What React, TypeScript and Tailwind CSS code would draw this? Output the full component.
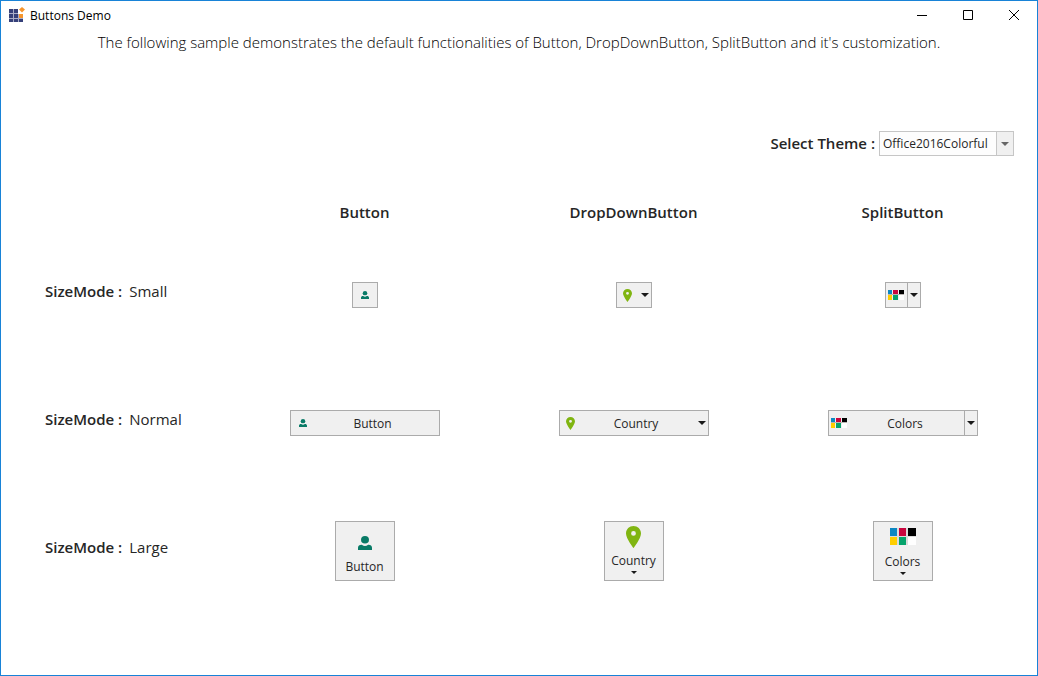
import { useState, type ReactNode } from "react";

function AppLogo() {
  return (
    <svg width="16" height="16" viewBox="0 0 16 16" aria-hidden="true">
      <path d="M0 2h9v5h5v8H0z" fill="#a9aec9" />
      <path d="M0 2h4v4H0zM5 2h4v4H5zM0 7h4v4H0zM5 7h4v4H5zM0 12h4v3H0zM5 12h4v3H5zM10 12h4v3h-4z" fill="#354079" />
      <path d="M10 7h4v4h-4z" fill="#f5952d" />
      <path d="M13 0l3 2.500-3 3-3-3z" fill="#f5952d" />
    </svg>
  );
}

function PersonIcon({ size }: { size: number }) {
  return (
    <svg width={size} height={size} viewBox="0 0 14 14" fill="#087a66" aria-hidden="true">
      <ellipse cx="7" cy="3.8" rx="4" ry="3.8" />
      <path d="M0 14v-2.200C0 9.800 1.400 8.700 3.600 8.700h.2a5 5 0 0 0 6.400 0h.2C12.600 8.700 14 9.800 14 11.800V14z" />
    </svg>
  );
}

function PinIcon({ width, height }: { width: number; height: number }) {
  return (
    <svg width={width} height={height} viewBox="0 0 15 22" preserveAspectRatio="none" aria-hidden="true">
      <path
        fillRule="evenodd"
        fill="#80b511"
        d="M7.500 0C3.400 0 0 3.200 0 7.400 0 12.500 7.500 22 7.500 22S15 12.500 15 7.400C15 3.200 11.600 0 7.500 0zm0 5a2.400 2.400 0 1 1 0 4.800 2.400 2.400 0 0 1 0-4.800z"
      />
    </svg>
  );
}

function SwatchIcon({ large = false }: { large?: boolean }) {
  return large ? (
    <svg width="26" height="18" viewBox="0 0 26 18" shapeRendering="crispEdges" aria-hidden="true">
      <path d="M0 8h26v1H0zM7 0h2v17H7zM16 0h2v17h-2z" fill="#dcdcdc" />
      <path d="M0 0h7v8H0z" fill="#0c87c2" />
      <path d="M9 0h7v8H9z" fill="#c8063e" />
      <path d="M18 0h8v8h-8z" fill="#000" />
      <path d="M0 9h7v8H0z" fill="#ffce00" />
      <path d="M9 9h7v8H9z" fill="#06a36c" />
      <path d="M18 9h8v8h-8z" fill="#fff" />
    </svg>
  ) : (
    <svg width="16" height="10" viewBox="0 0 16 10" shapeRendering="crispEdges" aria-hidden="true">
      <path d="M0 4h16v1H0z" fill="#b9b5b2" />
      <path d="M0 0h4v4H0z" fill="#0c87c2" />
      <path d="M5 0h5v4H5z" fill="#c8063e" />
      <path d="M11 0h5v4h-5z" fill="#000" />
      <path d="M0 5h4v5H0z" fill="#ffce00" />
      <path d="M5 5h5v5H5z" fill="#06a36c" />
      <path d="M11 5h5v5h-5z" fill="#fff" />
    </svg>
  );
}

function Caret({ small = false, color = "#1a1a1a" }: { small?: boolean; color?: string }) {
  return (
    <svg width={small ? 6 : 8} height={small ? 3 : 4} viewBox="0 0 8 4" fill={color} aria-hidden="true">
      <path d="M0 0h8L4 4z" />
    </svg>
  );
}

const face = "flex items-center border border-[#ababab] bg-[#f0f0f0] text-[12px] leading-4 text-[#262626] hover:bg-[#e3e3e3]";

function Row({ label, children }: { label: string; children: ReactNode }) {
  return (
    <div className="grid h-32 grid-cols-[229px_repeat(3,minmax(0,1fr))] items-center justify-items-center">
      <h2 className="mb-2 flex gap-[7px] justify-self-start pl-11 text-[15px] leading-5">
        <span className="font-semibold">SizeMode :</span>
        <span>{label}</span>
      </h2>
      {children}
    </div>
  );
}

const themes = ["Office2016Colorful", "Office2016White", "Office2016Black", "Office2016DarkGray"];

export default function App() {
  const [theme, setTheme] = useState(themes[0]);

  return (
    <div className="min-h-screen border border-[#1883d7] bg-white font-['Open_Sans',sans-serif] text-[#262626]">
      <header className="flex h-7 items-center pl-2">
        <AppLogo />
        <h1 className="ml-[5px] grow pt-0.5 text-[12px] leading-4 text-black">Buttons Demo</h1>
        <button type="button" aria-label="Minimize" className="flex h-7 w-[46px] items-center justify-center hover:bg-gray-200">
          <svg width="10" height="10" aria-hidden="true"><path d="M0 5h10v1H0z" /></svg>
        </button>
        <button type="button" aria-label="Maximize" className="flex h-7 w-[46px] items-center justify-center hover:bg-gray-200">
          <svg width="10" height="10" fill="none" stroke="#000" aria-hidden="true"><path d="M.5 .5h9v9h-9z" /></svg>
        </button>
        <button type="button" aria-label="Close" className="flex h-7 w-[46px] items-center justify-center hover:bg-red-500">
          <svg width="10" height="10" fill="none" stroke="#000" aria-hidden="true"><path d="M0 0l10 10M10 0L0 10" /></svg>
        </button>
      </header>

      <main className="pt-px">
        <p className="text-center text-[15px] font-light leading-6 text-black">
          The following sample demonstrates the default functionalities of Button, DropDownButton, SplitButton and it's customization.
        </p>

        <div className="mt-[77px] flex items-start justify-end pr-[23px]">
          <label htmlFor="theme" className="mr-1 text-[15px] font-semibold leading-6">Select Theme :</label>
          <div className="relative">
            <select
              id="theme"
              value={theme}
              onChange={(event) => setTheme(event.target.value)}
              className="block h-[25px] w-[135px] appearance-none border border-[#c6c6c6] bg-[#fdfdfd] pl-[3px] pr-[18px] text-[12px]"
            >
              {themes.map((name) => <option key={name}>{name}</option>)}
            </select>
            <span className="pointer-events-none absolute inset-y-px right-px flex w-[17px] items-center justify-center border-l border-[#c6c6c6] bg-[#f0f0f0]">
              <Caret color="#666" />
            </span>
          </div>
        </div>

        <div className="mb-[9px] mt-[46px] grid grid-cols-[229px_repeat(3,minmax(0,1fr))] text-center text-[15px] font-semibold leading-5">
          <h2 className="col-start-2">Button</h2>
          <h2>DropDownButton</h2>
          <h2>SplitButton</h2>
        </div>

        <Row label="Small">
          <button type="button" aria-label="Button" className={`${face} size-[26px] justify-center`}>
            <PersonIcon size={8} />
          </button>
          <button type="button" aria-label="Country" className={`${face} h-[26px] w-9 justify-between pl-1.5 pr-0.5`}>
            <PinIcon width={9} height={13} />
            <Caret />
          </button>
          <div className="flex">
            <button type="button" aria-label="Colors" className={`${face} h-[26px] w-[23px] justify-center`}>
              <SwatchIcon />
            </button>
            <button type="button" aria-label="More colors" className={`${face} h-[26px] w-[13px] justify-center border-l-0`}>
              <Caret />
            </button>
          </div>
        </Row>

        <Row label="Normal">
          <button type="button" className={`${face} h-[26px] w-[150px] pl-2`}>
            <PersonIcon size={8} />
            <span className="grow pt-0.5 text-center">Button</span>
          </button>
          <button type="button" className={`${face} h-[26px] w-[150px] pl-1.5 pr-0.5`}>
            <PinIcon width={9} height={13} />
            <span className="grow pt-0.5 text-center">Country</span>
            <Caret />
          </button>
          <div className="flex">
            <button type="button" className={`${face} h-[26px] w-[137px] pl-0.5`}>
              <SwatchIcon />
              <span className="grow pt-0.5 text-center">Colors</span>
            </button>
            <button type="button" aria-label="More colors" className={`${face} h-[26px] w-[13px] justify-center border-l-0`}>
              <Caret />
            </button>
          </div>
        </Row>

        <Row label="Large">
          <button type="button" className={`${face} size-[60px] flex-col pt-[14px]`}>
            <PersonIcon size={14} />
            <span className="mt-[9px]">Button</span>
          </button>
          <button type="button" className={`${face} size-[60px] flex-col pt-1`}>
            <PinIcon width={15} height={22} />
            <span className="mb-0.5 mt-[5px]">Country</span>
            <Caret small />
          </button>
          <button type="button" className={`${face} size-[60px] flex-col pt-1.5`}>
            <SwatchIcon large />
            <span className="mb-0.5 mt-2">Colors</span>
            <Caret small />
          </button>
        </Row>
      </main>
    </div>
  );
}
